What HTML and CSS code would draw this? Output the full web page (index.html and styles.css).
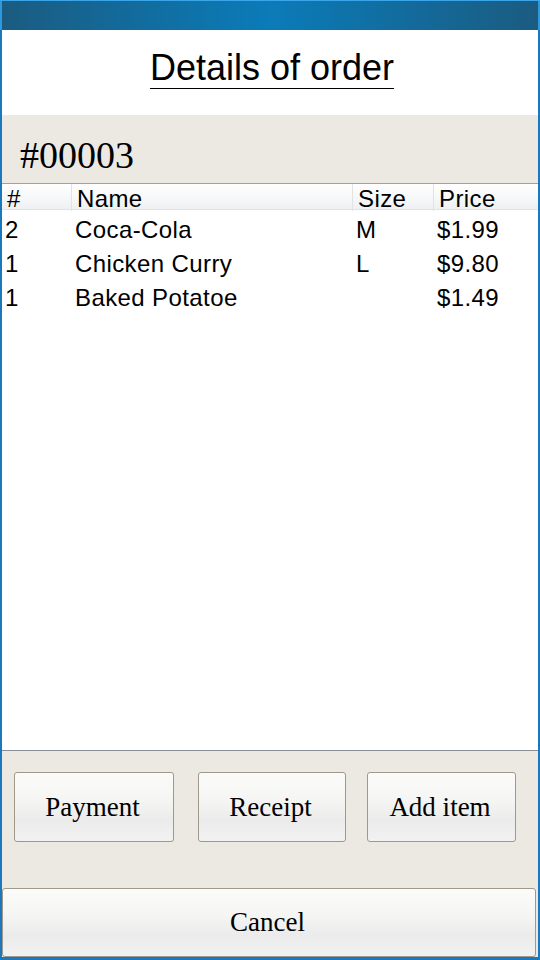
FILE: index.html
```html
<!DOCTYPE html>
<html>
<head>
<meta charset="utf-8">
<link rel="stylesheet" href="styles.css">
</head>
<body>
<div class="window">
  <div class="titlebar"></div>
  <div class="frame">
    <div class="page-head">
      <span class="page-title">Details of order</span>
    </div>
    <div class="order-band">#00003</div>
    <div class="table">
      <div class="thead">
        <div class="th c1">#</div>
        <div class="th c2">Name</div>
        <div class="th c3">Size</div>
        <div class="th c4">Price</div>
      </div>
      <div class="tbody">
        <div class="tr"><div class="td">2</div><div class="td">Coca-Cola</div><div class="td">M</div><div class="td">$1.99</div></div>
        <div class="tr"><div class="td">1</div><div class="td">Chicken Curry</div><div class="td">L</div><div class="td">$9.80</div></div>
        <div class="tr"><div class="td">1</div><div class="td">Baked Potatoe</div><div class="td"></div><div class="td">$1.49</div></div>
      </div>
    </div>
    <div class="actions">
      <div class="btn-row">
        <button class="btn btn-pay">Payment</button>
        <button class="btn btn-receipt">Receipt</button>
        <button class="btn btn-add">Add item</button>
      </div>
      <button class="btn btn-cancel">Cancel</button>
    </div>
  </div>
</div>
</body>
</html>
```
FILE: styles.css
```css
html, body {
  margin: 0;
  padding: 0;
  background: #ffffff;
}
.window {
  width: 540px;
  height: 960px;
  display: flex;
  flex-direction: column;
  box-sizing: border-box;
  background: #1b78bd;
  overflow: hidden;
}
.titlebar {
  height: 29px;
  flex: none;
  border-top: 1px solid #3ba5ea;
  background: linear-gradient(90deg, #1b5b80 0%, #0f72a8 35%, #0b7bb9 50%, #0f72a8 65%, #1b5b80 100%);
  box-shadow: inset 2px 0 0 #2f97dc, inset -2px 0 0 #2f97dc;
}
.frame {
  flex: 1;
  margin: 0 2px 3px 2px;
  display: flex;
  flex-direction: column;
  background: #ffffff;
  font-family: "Liberation Sans", Arial, sans-serif;
  color: #000;
}
.page-head {
  height: 85px;
  box-sizing: border-box;
  padding-top: 17px;
  text-align: center;
  background: #fff;
}
.page-title {
  display: inline-block;
  font-size: 36px;
  line-height: 41px;
  border-bottom: 1px solid #000;
  margin-left: 4px;
}
.order-band {
  height: 68px;
  box-sizing: border-box;
  padding: 19px 0 0 18px;
  background: #ece9e3;
  font-family: "Liberation Serif", "Times New Roman", serif;
  font-size: 38px;
  line-height: 42px;
}
.table {
  flex: 1;
  display: flex;
  flex-direction: column;
  background: #fff;
}
.thead {
  display: grid;
  grid-template-columns: 70px 281px 81px 1fr;
  height: 27px;
  box-sizing: border-box;
  border-top: 1px solid #a0a0a0;
  border-bottom: 1px solid #e2e3e5;
  background: linear-gradient(180deg, #ffffff 0%, #f6f7f8 60%, #eef0f2 100%);
}
.th {
  font-size: 24px;
  letter-spacing: 0.4px;
  line-height: 25px;
  padding: 2px 0 0 5px;
  border-right: 1px solid #e3e3e3;
}
.th.c4 {
  border-right: none;
}
.tbody {
  padding-top: 3px;
}
.tr {
  display: grid;
  grid-template-columns: 70px 281px 81px 1fr;
  height: 34px;
}
.td {
  font-size: 24px;
  letter-spacing: 0.4px;
  line-height: 34px;
  padding-left: 3px;
}
.actions {
  height: 207px;
  flex: none;
  box-sizing: border-box;
  border-top: 1px solid #8a8f96;
  background: #ece9e3;
  display: flex;
  flex-direction: column;
}
.btn-row {
  display: flex;
  gap: 24px;
  padding: 21px 0 0 12px;
  height: 137px;
  box-sizing: border-box;
}
.btn {
  font-family: "Liberation Serif", "Times New Roman", serif;
  font-size: 27px;
  color: #000;
  border: 1px solid #a0988a;
  border-radius: 3px;
  background: linear-gradient(180deg, #fbfbfa 0%, #f5f5f4 40%, #ebebeb 70%, #f2f2f2 100%);
  padding: 0 3px 0 0;
  margin: 0;
  height: 70px;
  box-sizing: border-box;
}
.btn-pay { width: 160px; }
.btn-receipt { width: 148px; }
.btn-add { width: 149px; margin-left: -3px; }
.btn-cancel {
  width: 534px;
  height: 69px;
}
```
